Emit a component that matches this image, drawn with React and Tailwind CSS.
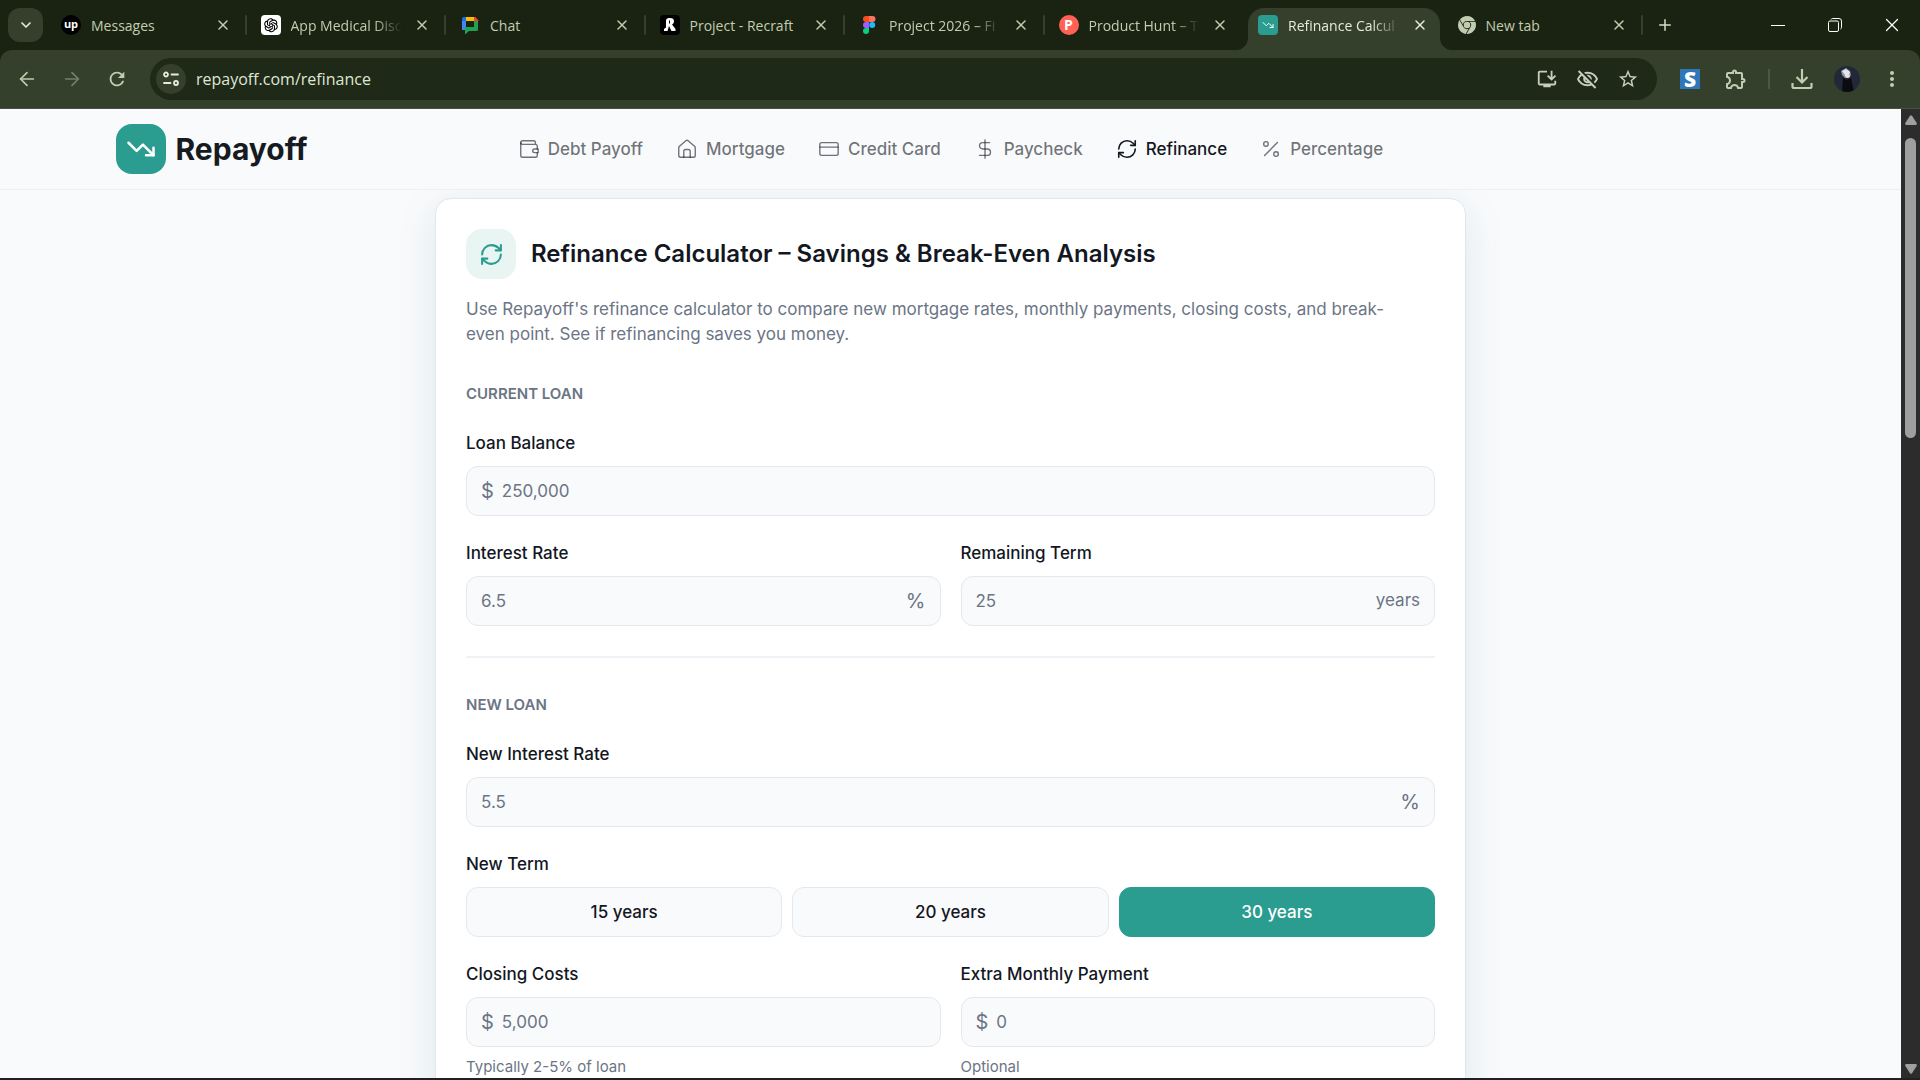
import { useState } from "react";
import {
  CreditCard,
  DollarSign,
  Percent,
  RefreshCw,
  TrendingDown,
  X,
  Plus,
  ChevronDown,
  ArrowLeft,
  ArrowRight,
} from "lucide-react";
import {
  MdOutlineInstallDesktop,
  MdOutlineVisibilityOff,
  MdStarBorder,
  MdOutlineExtension,
  MdRefresh,
  MdMoreVert,
} from "react-icons/md";
import { AiOutlineOpenAI } from "react-icons/ai";
import { SiGooglechrome } from "react-icons/si";

function WalletIcon({ className }) {
  return (
    <svg className={className} viewBox="0 0 24 24" fill="none" stroke="currentColor" strokeWidth="1.5" strokeLinecap="round" strokeLinejoin="round" aria-hidden="true">
      <path d="M19 7V5a2 2 0 0 0-2-2H5a2 2 0 0 0 0 4h14a2 2 0 0 1 2 2v3" />
      <path d="M3 5v14a2 2 0 0 0 2 2h14a2 2 0 0 0 2-2v-3" />
      <path d="M18 12a2 2 0 0 0 0 4h4v-4Z" />
    </svg>
  );
}

function HouseIcon({ className }) {
  return (
    <svg className={className} viewBox="0 0 24 24" fill="none" stroke="currentColor" strokeWidth="1.5" strokeLinecap="round" strokeLinejoin="round" aria-hidden="true">
      <path d="M3 10.5a2 2 0 0 1 .8-1.6l7-6a2 2 0 0 1 2.4 0l7 6a2 2 0 0 1 .8 1.6V19a2 2 0 0 1-2 2H5a2 2 0 0 1-2-2z" />
      <path d="M8.500 21v-6.500a2 2 0 0 1 2-2h3a2 2 0 0 1 2 2V21" />
    </svg>
  );
}

function ChatIcon() {
  return (
    <svg className="size-5" viewBox="0 0 20 20" aria-hidden="true">
      <path d="M2 3.500A1.500 1.500 0 0 1 3.500 2H6v12H2z" fill="#1e6fe0" />
      <path d="M6 2h9v4H6z" fill="#fbbc04" />
      <path d="M14 2h1.500L19 6h-5z" fill="#ea4335" />
      <path d="M2 6h4v9H2z" fill="#4285f4" />
      <path d="M14 6h4v8.500a1.500 1.500 0 0 1-1.500 1.500H9l-4 3.500V12h9z" fill="#1fa352" />
      <path d="M6 6h8v6H6z" fill="#1a2312" />
    </svg>
  );
}

function FigmaIcon() {
  return (
    <svg className="size-5" viewBox="0 0 20 20" aria-hidden="true">
      <path d="M10 1H7a3 3 0 0 0 0 6h3z" fill="#f24e1e" />
      <path d="M10 1h3.500a3 3 0 0 1 0 6H10z" fill="#ff7262" />
      <path d="M10 7H7a3 3 0 0 0 0 6h3z" fill="#a259ff" />
      <circle cx="13.200" cy="10" r="3" fill="#1abcfe" />
      <path d="M7 13h3v3a3 3 0 1 1-3-3z" fill="#0acf83" />
    </svg>
  );
}

const tabs = [
  {
    title: "Messages",
    icon: (
      <span className="flex size-5 items-center justify-center rounded-full bg-black pb-1 text-[11px] leading-none font-bold text-white">
        up
      </span>
    ),
  },
  {
    title: "App Medical Disc",
    fade: true,
    icon: (
      <span className="flex size-5 items-center justify-center rounded bg-white text-black">
        <AiOutlineOpenAI className="size-[18px]" />
      </span>
    ),
  },
  { title: "Chat", icon: <ChatIcon /> },
  {
    title: "Project - Recraft",
    icon: (
      <span className="flex size-5 items-center justify-center rounded bg-black">
        <svg className="size-5" viewBox="0 0 20 20" aria-hidden="true">
          <path d="M6 5.500C6 3.500 8 3 10 3c2.500 0 4 1.200 4 3.200 0 1.600-.8 2.600-2 3.200l3.500 4.600V16h-4L9 11l-1.500 5H4v-2l2-1.500z" fill="#fff" />
          <path d="M9 5.500h1v3H9z" fill="#000" />
        </svg>
      </span>
    ),
  },
  { title: "Project 2026 – Fi", fade: true, icon: <FigmaIcon /> },
  {
    title: "Product Hunt – T",
    fade: true,
    icon: (
      <span className="flex size-5 items-center justify-center rounded-full bg-[#ff6154] text-[14px] leading-none font-bold text-white">
        P
      </span>
    ),
  },
  {
    title: "Refinance Calcul",
    fade: true,
    active: true,
    icon: (
      <span className="flex size-5 items-center justify-center rounded bg-[#2a9d90] text-white">
        <TrendingDown className="size-3" />
      </span>
    ),
  },
  { title: "New tab", icon: <SiGooglechrome className="size-[18px] text-[#c0cdb0]" /> },
];

function BrowserTab({ tab, nextActive }) {
  return (
    <div
      className={`relative flex h-full min-w-0 flex-1 items-center pb-2 ${
        tab.active
          ? "mx-1 rounded-t-2xl bg-[#343f2c] px-2.5 text-[#e4ecd8]"
          : "px-3.5 text-[#c0cdb0]"
      }`}
    >
      {tab.active && (
        <>
          <svg className="absolute bottom-0 -left-3 size-3" viewBox="0 0 12 12" aria-hidden="true">
            <path d="M12 0v12H0A12 12 0 0 0 12 0z" fill="#343f2c" />
          </svg>
          <svg className="absolute -right-3 bottom-0 size-3" viewBox="0 0 12 12" aria-hidden="true">
            <path d="M0 0v12h12A12 12 0 0 1 0 0z" fill="#343f2c" />
          </svg>
        </>
      )}
      {tab.icon}
      <span
        className={`ml-2.5 min-w-0 flex-1 overflow-hidden text-[14px] whitespace-nowrap ${
          tab.fade ? "mask-r-from-75%" : ""
        }`}
      >
        {tab.title}
      </span>
      <button type="button" aria-label="Close tab" className="ml-2.5 flex size-5 items-center justify-center">
        <X className="size-4" strokeWidth={2.2} />
      </button>
      {!tab.active && !nextActive && (
        <span className="absolute right-0 h-5 w-0.5 rounded-full bg-[#343f2c]" />
      )}
    </div>
  );
}

function TabStrip() {
  return (
    <div className="flex h-[50px] items-center pl-2">
      <button type="button" aria-label="Search tabs" className="flex h-[34px] w-[35px] items-center justify-center rounded-xl bg-[#343f2c] text-[#e4ecd8]">
        <ChevronDown className="size-4" strokeWidth={2.5} />
      </button>
      <div className="ml-1 flex h-[42px] max-w-[1596px] min-w-0 flex-1 self-end">
        {tabs.map((tab, i) => (
          <BrowserTab key={tab.title} tab={tab} nextActive={tabs[i + 1]?.active} />
        ))}
      </div>
      <button type="button" aria-label="New tab" className="ml-3 flex size-5 items-center justify-center text-[#d5dfc6]">
        <Plus className="size-[18px]" />
      </button>
      <div className="ml-auto flex text-white">
        <button type="button" aria-label="Minimize" className="flex h-10 w-[57px] items-center justify-center">
          <span className="h-px w-3.5 bg-white" />
        </button>
        <button type="button" aria-label="Restore" className="flex h-10 w-[57px] items-center justify-center">
          <svg className="size-3.5" viewBox="0 0 14 14" fill="none" stroke="currentColor" aria-hidden="true">
            <rect x="0.500" y="3" width="10" height="10.500" rx="1.500" />
            <path d="M3 1.500C3.300.8 4 .5 4.500.500h6.500a2.500 2.500 0 0 1 2.500 2.500v6.500c0 .8-.4 1.300-1 1.500" />
          </svg>
        </button>
        <button type="button" aria-label="Close" className="flex h-10 w-[57px] items-center justify-center">
          <X className="size-[22px]" strokeWidth={1.3} />
        </button>
      </div>
    </div>
  );
}

function Toolbar() {
  return (
    <div className="flex h-[59px] items-center rounded-t-xl border-b border-[#4a4f45] bg-[#343f2c] pl-4 text-[#c0cdb0]">
      <div className="flex gap-[23px]">
        <button type="button" aria-label="Back">
          <ArrowLeft className="size-[22px]" strokeWidth={1.8} />
        </button>
        <button type="button" aria-label="Forward" className="text-[#74806a]">
          <ArrowRight className="size-[22px]" strokeWidth={1.8} />
        </button>
        <button type="button" aria-label="Reload">
          <MdRefresh className="size-[22px]" />
        </button>
      </div>
      <div className="ml-[22px] flex h-[42px] flex-1 items-center rounded-full bg-[#1f2917] pr-[18px] pl-1.5">
        <button type="button" aria-label="Site information" className="flex size-[30px] items-center justify-center rounded-full bg-[#343f2c] text-[#e4ecd8]">
          <svg className="size-[18px]" viewBox="0 0 18 18" fill="none" stroke="currentColor" strokeWidth="1.800" strokeLinecap="round" aria-hidden="true">
            <circle cx="4" cy="4.500" r="2" />
            <path d="M9.500 4.500H16" />
            <path d="M2 13h6.500" />
            <circle cx="14" cy="13" r="2" />
          </svg>
        </button>
        <input
          aria-label="Address"
          defaultValue="repayoff.com/refinance"
          className="ml-2.5 min-w-0 flex-1 bg-transparent text-[16px] text-[#dfe6d4] outline-none"
        />
        <div className="flex gap-[18px] text-[#c8cdc2]">
          <button type="button" aria-label="Install app"><MdOutlineInstallDesktop className="size-[22px]" /></button>
          <button type="button" aria-label="Tracking blocked"><MdOutlineVisibilityOff className="size-[23px]" /></button>
          <button type="button" aria-label="Bookmark"><MdStarBorder className="size-[22px]" /></button>
        </div>
      </div>
      <div className="flex items-center pr-4 pl-[23px]">
        <button type="button" aria-label="S extension" className="flex size-5 items-center justify-center bg-[#2f77b8] text-[21px] leading-none font-extrabold text-white">
          S
        </button>
        <button type="button" aria-label="Extensions" className="ml-6">
          <MdOutlineExtension className="size-6" />
        </button>
        <span className="ml-5 h-5 w-0.5 bg-[#4b5842]" />
        <button type="button" aria-label="Downloads" className="ml-5">
          <svg className="size-6" viewBox="0 0 24 24" fill="none" stroke="currentColor" strokeWidth="2.200" aria-hidden="true">
            <path d="M12 2v13M6.500 10l5.500 5.500L17.500 10M2.500 16v3.500a1.500 1.500 0 0 0 1.500 1.500h16a1.500 1.500 0 0 0 1.500-1.500V16" />
          </svg>
        </button>
        <button type="button" aria-label="Profile" className="ml-5">
          <svg className="size-[26px] rounded-full" viewBox="0 0 26 26" aria-hidden="true">
            <rect width="26" height="26" fill="#222838" />
            <path d="M7 5l5-3 4 3 1 4-2 3h-4l-3-3z" fill="#8d94a3" />
            <path d="M8 5l4-2 4 3-1 3-4 0z" fill="#e3e6ec" />
            <path d="M11 8h4l1 3-3 1-2-2z" fill="#efe3dc" />
            <path d="M9 12l4 2 4-2 3 14H8z" fill="#090b10" />
          </svg>
        </button>
        <button type="button" aria-label="Menu" className="ml-5">
          <MdMoreVert className="size-6" />
        </button>
      </div>
    </div>
  );
}

const navLinks = [
  { label: "Debt Payoff", Icon: WalletIcon },
  { label: "Mortgage", Icon: HouseIcon },
  { label: "Credit Card", Icon: CreditCard },
  { label: "Paycheck", Icon: DollarSign },
  { label: "Refinance", Icon: RefreshCw, active: true },
  { label: "Percentage", Icon: Percent },
];

function SiteHeader() {
  return (
    <header className="relative z-10 border-b border-[#edf0f3] bg-[#f9fafc]">
      <div className="mx-auto grid h-20 max-w-[1670px] grid-cols-[1fr_auto_1fr] items-center">
        <a href="#" className="flex items-center gap-2.5">
          <span className="flex size-[50px] items-center justify-center rounded-2xl bg-[#2a9d90] text-white">
            <TrendingDown className="size-[30px]" />
          </span>
          <span className="text-[30px] font-bold text-[#161b22]">Repayoff</span>
        </a>
        <nav className="flex gap-[33px]">
          {navLinks.map(({ label, Icon, active }) => (
            <a
              key={label}
              href="#"
              className={`flex items-center gap-2 text-[17px] leading-7 font-medium ${active ? "text-[#13171f]" : "text-[#13171f]/60"}`}
            >
              <Icon className="size-[22px]" strokeWidth={active ? 1.75 : 1.5} />
              {label}
            </a>
          ))}
        </nav>
      </div>
    </header>
  );
}

function Field({ id, label, prefix, suffix, placeholder, hint }) {
  const [value, setValue] = useState("");

  return (
    <div>
      <label htmlFor={id} className="block text-[17px] leading-[25px] font-medium">
        {label}
      </label>
      <div className="mt-2.5 flex h-[50px] items-center rounded-xl border border-[#e3e8ee] bg-[#f9fafc] px-3.5 text-[#6b7585]">
        {prefix && <span className="mr-2 text-[20px]">{prefix}</span>}
        <input
          id={id}
          value={value}
          onChange={(e) => setValue(e.target.value)}
          placeholder={placeholder}
          className="h-full min-w-0 flex-1 bg-transparent text-[17px] outline-none placeholder:text-[#6b7585]"
        />
        {suffix && <span className={suffix === "%" ? "text-[20px]" : "text-[17px]"}>{suffix}</span>}
      </div>
      {hint && <p className="mt-2.5 text-[15px] leading-5 text-[#6b7585]">{hint}</p>}
    </div>
  );
}

function RefinanceCard() {
  const [term, setTerm] = useState(30);

  return (
    <section className="mx-auto mt-2 max-w-[1031px] rounded-2xl border border-[#e1e7ee] bg-white p-[30px] text-[#13171f] shadow-[0_10px_40px_rgba(30,110,100,0.12)]">
      <div className="flex items-center gap-[15px]">
        <span className="flex size-[50px] items-center justify-center rounded-2xl bg-[#e9f5f3] text-[#2a9d90]">
          <RefreshCw className="size-[25px]" />
        </span>
        <h1 className="text-[24px] font-semibold">Refinance Calculator – Savings &amp; Break-Even Analysis</h1>
      </div>
      <p className="mt-[18px] pr-5 text-[17px] leading-[25px] text-[#6b7585]">
        Use Repayoff's refinance calculator to compare new mortgage rates, monthly payments, closing costs, and
        break-even point. See if refinancing saves you money.
      </p>

      <form className="mt-[34px]">
        <div className="border-b-2 border-[#eff2f6] pb-[30px]">
          <h2 className="text-[15px] leading-[25px] font-semibold text-[#6b7585]">CURRENT LOAN</h2>
          <div className="mt-[25px] grid grid-cols-2 gap-x-5 gap-y-[25px]">
            <div className="col-span-2">
              <Field id="balance" label="Loan Balance" prefix="$" placeholder="250,000" />
            </div>
            <Field id="rate" label="Interest Rate" suffix="%" placeholder="6.5" />
            <Field id="remaining" label="Remaining Term" suffix="years" placeholder="25" />
          </div>
        </div>

        <h2 className="mt-[34px] text-[15px] leading-[25px] font-semibold text-[#6b7585]">NEW LOAN</h2>
        <div className="mt-[25px] grid grid-cols-2 gap-x-5 gap-y-[25px]">
          <div className="col-span-2">
            <Field id="new-rate" label="New Interest Rate" suffix="%" placeholder="5.5" />
          </div>
          <fieldset className="col-span-2">
            <legend className="block text-[17px] leading-[25px] font-medium">New Term</legend>
            <div className="mt-2.5 grid grid-cols-3 gap-2.5">
              {[15, 20, 30].map((years) => (
                <button
                  key={years}
                  type="button"
                  aria-pressed={term === years}
                  onClick={() => setTerm(years)}
                  className={`h-[50px] rounded-xl border text-[17px] leading-7 font-medium ${
                    term === years
                      ? "border-[#2a9d90] bg-[#2a9d90] text-white"
                      : "border-[#e3e8ee] bg-[#f9fafc]"
                  }`}
                >
                  {years} years
                </button>
              ))}
            </div>
          </fieldset>
          <Field id="closing" label="Closing Costs" prefix="$" placeholder="5,000" hint="Typically 2-5% of loan" />
          <Field id="extra" label="Extra Monthly Payment" prefix="$" placeholder="0" hint="Optional" />
        </div>
      </form>
    </section>
  );
}

function Scrollbar() {
  return (
    <div className="flex w-[19px] flex-col items-center bg-[#2c2c2c] pt-1.5 pb-1" aria-hidden="true">
      <svg className="h-2.5 w-3" viewBox="0 0 12 10" fill="#9f9f9f">
        <path d="M5 .8q1-1.200 2 0L11.700 8q.5 1.800-1 2H1.300q-1.500-.2-1-2z" />
      </svg>
      <div className="mt-[13px] h-[300px] w-[11px] rounded-full bg-[#9f9f9f]" />
      <svg className="mt-auto h-2.5 w-3" viewBox="0 0 12 10" fill="#9f9f9f">
        <path d="M5 9.200q1 1.200 2 0L11.700 2q.5-1.800-1-2H1.300q-1.500.2-1 2z" />
      </svg>
    </div>
  );
}

function App() {
  return (
    <div className="flex h-screen flex-col border-b-2 border-[#231f20] bg-[#1a2312] font-['Open_Sans',sans-serif]">
      <TabStrip />
      <Toolbar />
      <div className="flex min-h-0 flex-1">
        <main className="min-w-0 flex-1 overflow-hidden bg-[#f9fafc] font-['Inter',sans-serif]">
          <SiteHeader />
          <RefinanceCard />
        </main>
        <Scrollbar />
      </div>
    </div>
  );
}

export default App;
